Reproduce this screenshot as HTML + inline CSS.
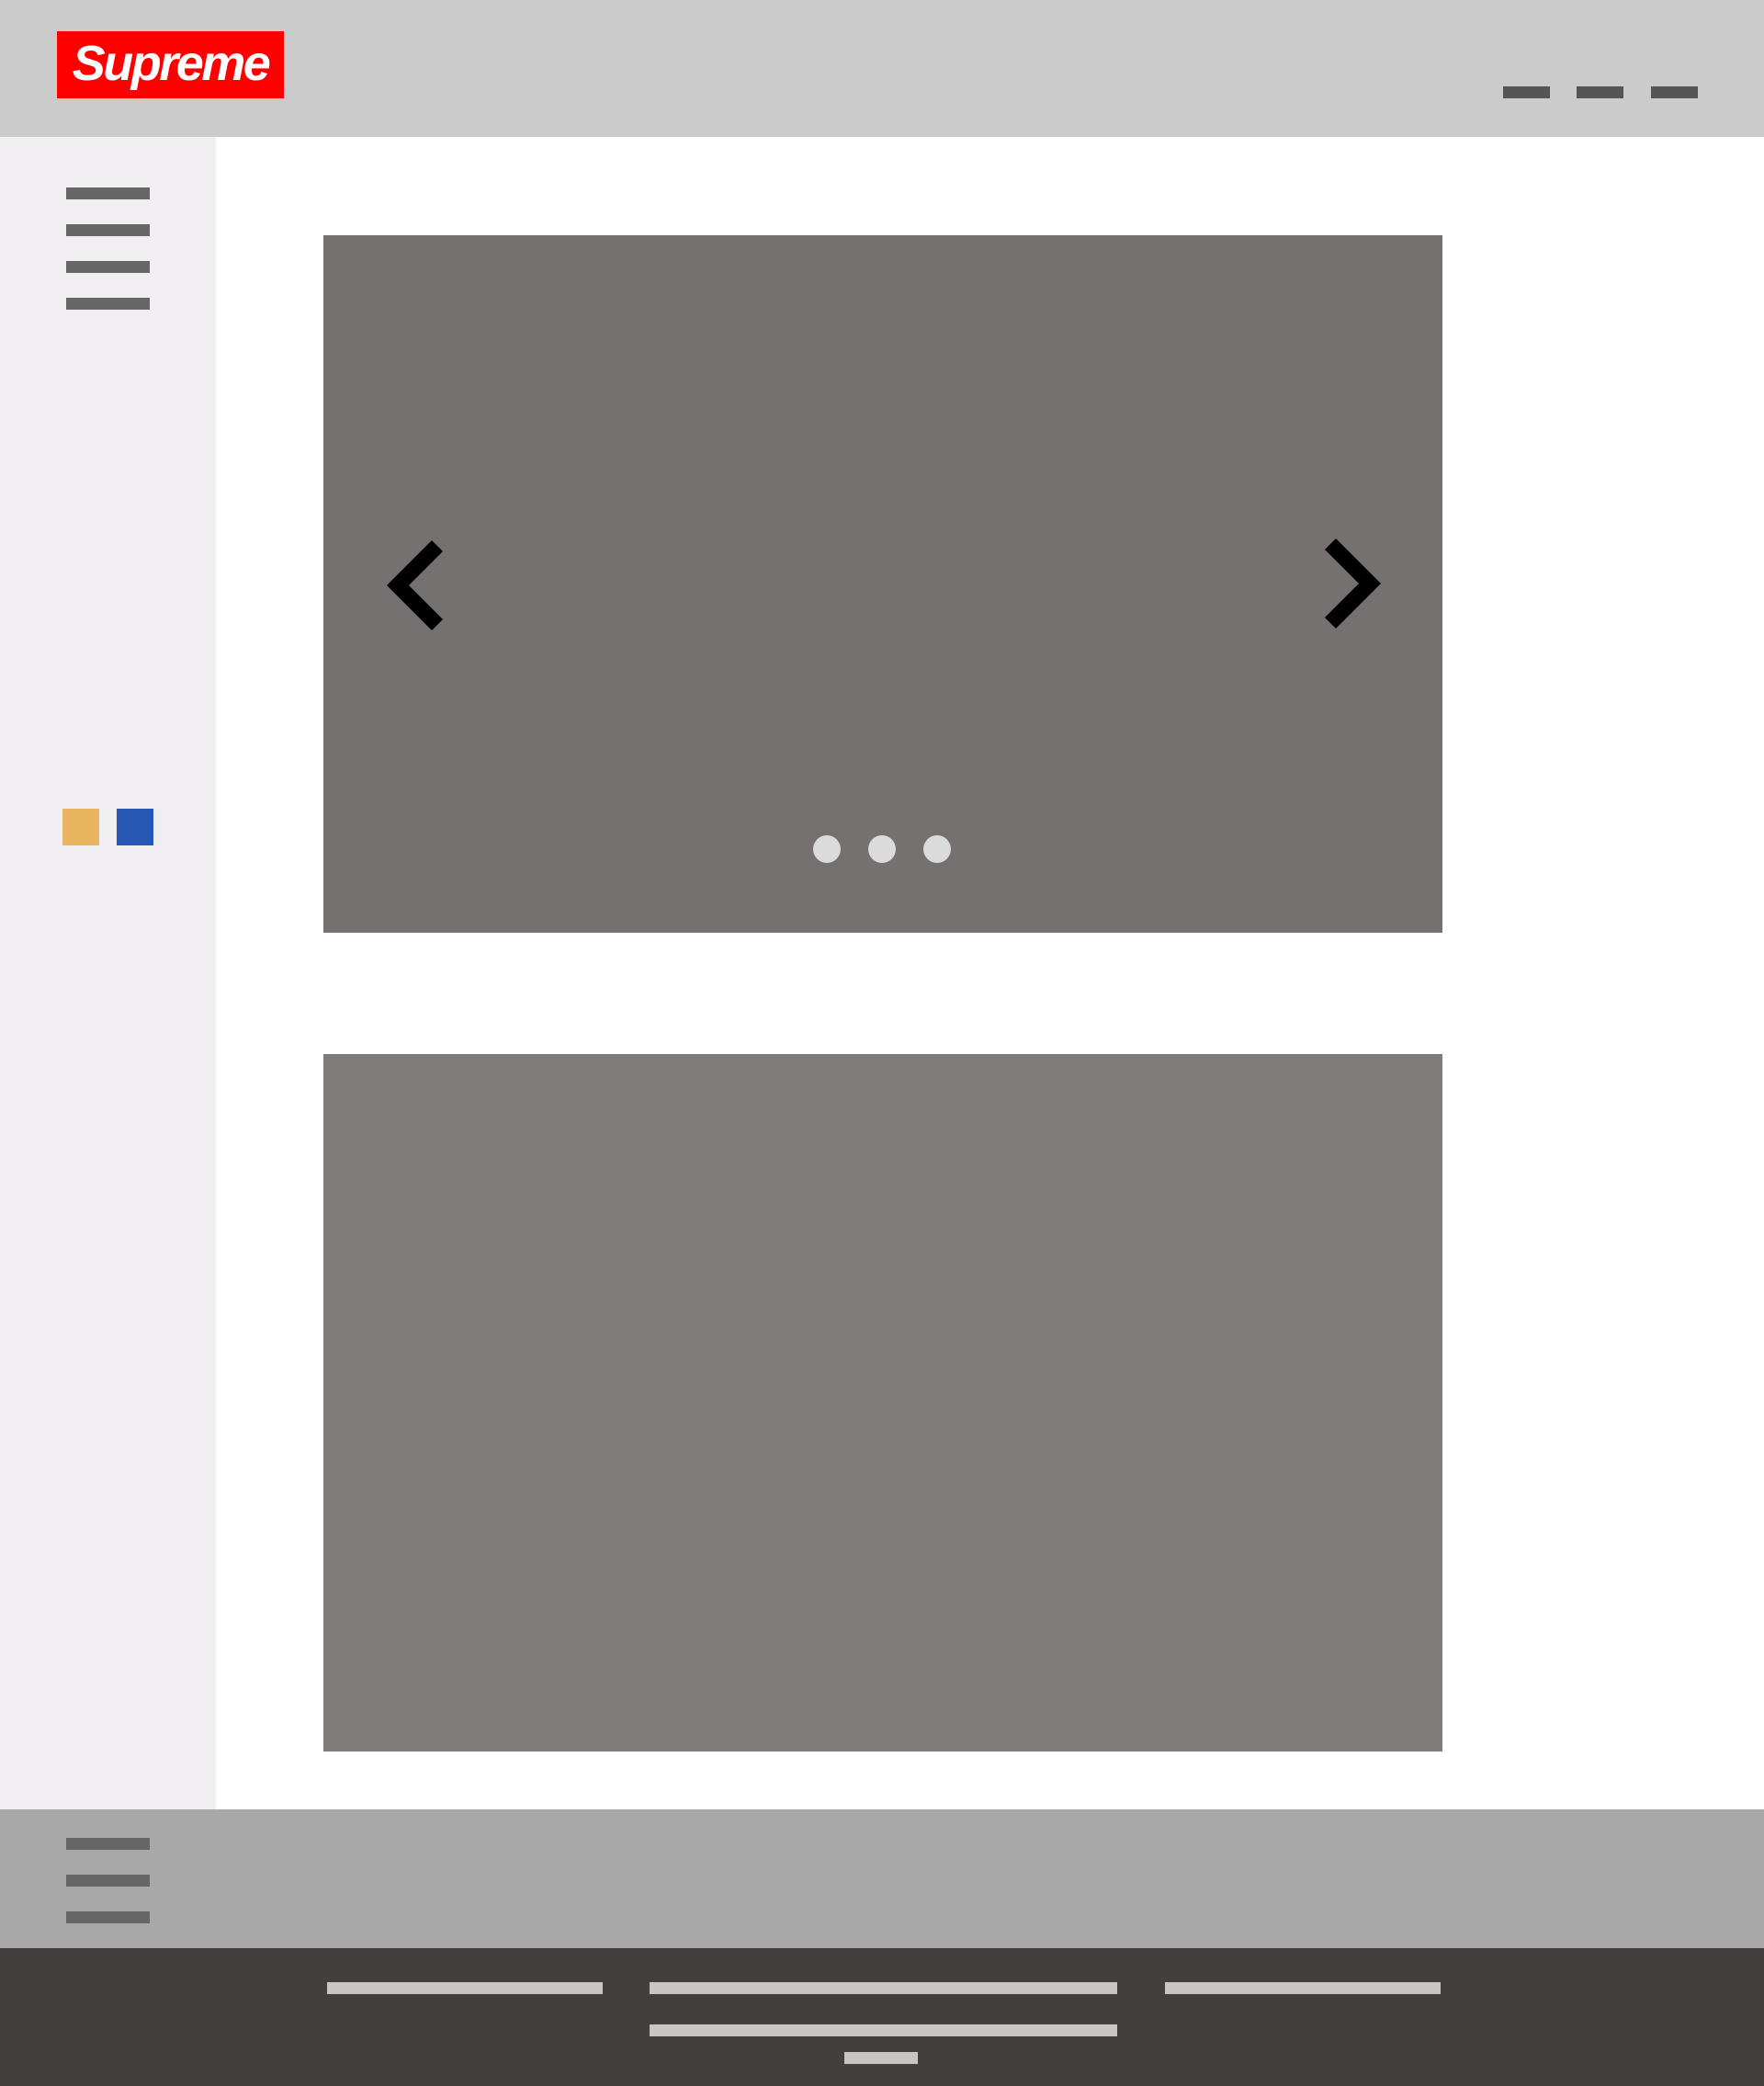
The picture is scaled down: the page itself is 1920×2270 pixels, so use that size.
<!DOCTYPE html>
<html><head><meta charset="utf-8"><style>
*{margin:0;padding:0;box-sizing:border-box}
body{width:1920px;height:2270px;position:relative;background:#fff;overflow:hidden;font-family:"Liberation Sans",sans-serif}
div{position:absolute}
.d{background:#555;width:51px;height:13px;top:94px}
.h{background:#666;left:72px;width:91px;height:13px}
.b{background:#c9c5c5;height:13px}
.dot{width:30px;height:30px;border-radius:50%;background:#dcdbdb;top:909px}
</style></head><body>
<div style="left:0;top:0;width:1920px;height:149px;background:#cbcbcb"></div>
<div style="left:62px;top:34px;width:247px;height:73px;background:#ff0000;color:#fff;font-weight:bold;font-style:italic;font-size:54px;line-height:71px;text-align:center;letter-spacing:-2.5px">Supreme</div>
<div class="d" style="left:1636px"></div>
<div class="d" style="left:1716px"></div>
<div class="d" style="left:1797px"></div>
<div style="left:0;top:149px;width:235px;height:1820px;background:#f0eef0"></div>
<div class="h" style="top:204px"></div>
<div class="h" style="top:244px"></div>
<div class="h" style="top:284px"></div>
<div class="h" style="top:324px"></div>
<div style="left:68px;top:880px;width:40px;height:40px;background:#e6b55e"></div>
<div style="left:127px;top:880px;width:40px;height:40px;background:#2858b5"></div>
<div style="left:352px;top:256px;width:1218px;height:759px;background:#747170"></div>
<svg style="position:absolute;left:0;top:0" width="1920" height="1100">
<polygon points="421,637 470,588 482,600 445,637 482,674 470,686" fill="#000"/>
<polygon points="1503,635 1454,586 1442,598 1479,635 1442,672 1454,684" fill="#000"/>
</svg>
<div class="dot" style="left:885px"></div>
<div class="dot" style="left:945px"></div>
<div class="dot" style="left:1005px"></div>
<div style="left:352px;top:1147px;width:1218px;height:759px;background:#807c7b"></div>
<div style="left:0;top:1969px;width:1920px;height:151px;background:#a9a8a9"></div>
<div class="h" style="top:2000px"></div>
<div class="h" style="top:2040px"></div>
<div class="h" style="top:2080px"></div>
<div style="left:0;top:2120px;width:1920px;height:150px;background:#433f3f"></div>
<div class="b" style="left:356px;top:2157px;width:300px"></div>
<div class="b" style="left:707px;top:2157px;width:509px"></div>
<div class="b" style="left:1268px;top:2157px;width:300px"></div>
<div class="b" style="left:707px;top:2203px;width:509px"></div>
<div class="b" style="left:919px;top:2233px;width:80px"></div>
</body></html>
